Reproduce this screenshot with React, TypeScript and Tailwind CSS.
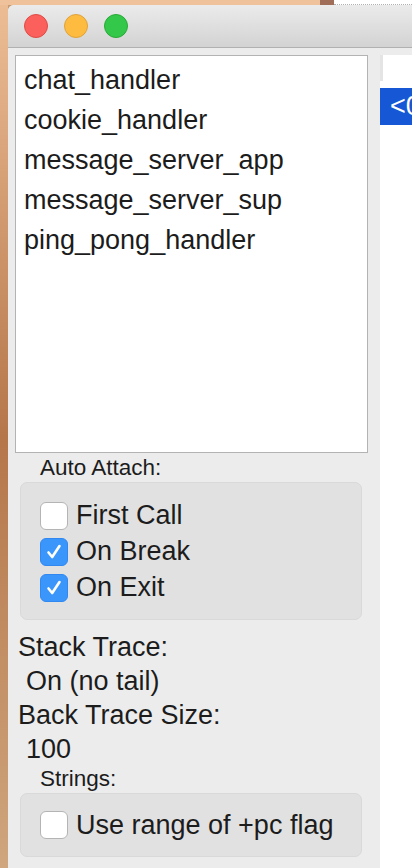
import React from 'react';

const modules = ['chat_handler', 'cookie_handler', 'message_server_app', 'message_server_sup', 'ping_pong_handler'];

function Check({ checked, label }: { checked: boolean; label: string }) {
  return (
    <div className="flex items-center h-[36px]">
      {checked ? (
        <div className="w-[28px] h-[28px] rounded-[6px] bg-[#3a96fb] border border-[#3188f0] flex items-center justify-center">
          <svg width="18" height="18" viewBox="0 0 18 18" fill="none">
            <path d="M3.5 9.5 L7.2 14 L14.5 3" stroke="white" strokeWidth="2.6" strokeLinecap="round" strokeLinejoin="round" />
          </svg>
        </div>
      ) : (
        <div className="w-[28px] h-[28px] rounded-[6px] bg-white border border-[#b4b4b4]" />
      )}
      <span className="ml-[8px] text-[27px] leading-none text-[#1c1c1c]">{label}</span>
    </div>
  );
}

export default function App() {
  return (
    <div className="w-[412px] h-[868px] overflow-hidden flex flex-col bg-[#c99a70]" style={{ fontFamily: '"Liberation Sans", Arial, sans-serif' }}>
      {/* desktop strip above the window */}
      <div className="h-[5px] flex shrink-0">
        <div className="w-[320px] bg-[#f0c29b]" />
        <div className="w-[14px] bg-[#a06e58]" />
        <div className="flex-1 bg-white border-b border-dotted border-[#b0b0b0]" />
      </div>

      <div className="flex flex-1 min-h-0">
        <div className="w-[8px] shrink-0 bg-linear-to-b from-[#ecbd95] via-[#b5764a] to-[#cfa67e]" />

        {/* window */}
        <div className="flex-1 flex flex-col rounded-tl-[6px] overflow-hidden bg-[#ececec]">
          <div className="h-[43px] shrink-0 flex items-center gap-[16px] pl-[16px] bg-linear-to-b from-[#ebebeb] to-[#d3d3d3] border-b border-[#b1b1b1]">
            <div className="w-[24px] h-[24px] rounded-full bg-[#fc605c] border border-[#df4a46]" />
            <div className="w-[24px] h-[24px] rounded-full bg-[#fdbc40] border border-[#dfa23a]" />
            <div className="w-[24px] h-[24px] rounded-full bg-[#34c84a] border border-[#28a936]" />
          </div>

          <div className="flex flex-1 min-h-0">
            {/* left panel */}
            <div className="w-[372px] shrink-0 pl-[7px] pt-[7px] text-[#1c1c1c]">
              <div className="w-[353px] h-[398px] bg-white border border-[#b3b3b3] pl-[8px] pt-[4px]">
                {modules.map((m) => (
                  <div key={m} className="h-[40px] flex items-center text-[27px]">
                    {m}
                  </div>
                ))}
              </div>

              <div className="ml-[25px] mt-[2px] h-[26px] flex items-center text-[22.5px]">Auto Attach:</div>
              <div className="ml-[5px] mt-[1px] w-[342px] h-[138px] rounded-[7px] bg-[#e1e1e1] border border-[#d9d9d9] pl-[19px] pt-[1px] flex flex-col justify-center">
                <Check checked={false} label="First Call" />
                <Check checked={true} label="On Break" />
                <Check checked={true} label="On Exit" />
              </div>

              <div className="mt-[10px] text-[27px] leading-[34px]">
                <div className="pl-[3px]">Stack Trace:</div>
                <div className="pl-[11px]">On (no tail)</div>
                <div className="pl-[3px]">Back Trace Size:</div>
                <div className="pl-[11px]">100</div>
              </div>
              <div className="ml-[25px] h-[26px] flex items-center text-[22.5px]">Strings:</div>
              <div className="ml-[5px] mt-[1px] w-[342px] h-[64px] rounded-[7px] bg-[#e1e1e1] border border-[#d9d9d9] pl-[19px] flex items-center">
                <Check checked={false} label="Use range of +pc flag" />
              </div>
            </div>

            {/* right pane */}
            <div className="flex-1 mt-[7px] bg-white flex flex-col overflow-hidden">
              <div className="h-[33px] flex">
                <div className="w-[3px] h-[26px] bg-[#e4e4e4]" />
              </div>
              <div className="h-[37px] bg-[#1557d4] text-white text-[27px] pl-[10px] flex items-center whitespace-nowrap overflow-hidden">
                &lt;0.61.0&gt;
              </div>
            </div>
          </div>
        </div>
      </div>
    </div>
  );
}
